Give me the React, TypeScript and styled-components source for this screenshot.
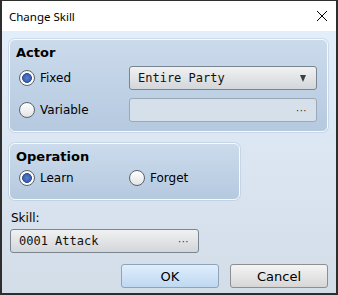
import React from "react";
import styled, { createGlobalStyle } from "styled-components";

const GlobalStyle = createGlobalStyle`
  html, body {
    margin: 0;
    padding: 0;
    background: #ffffff;
  }
`;

const Frame = styled.div`
  width: 338px;
  height: 295px;
  box-sizing: border-box;
  display: flex;
  flex-direction: column;
  border: 2px solid #2e2e2e;
  border-top-width: 1px;
  background: #ffffff;
`;

const TitleBar = styled.div`
  height: 30px;
  flex: none;
  display: flex;
  align-items: center;
  justify-content: space-between;
  padding: 0 8px 0 7px;
  font-family: "Noto Sans", sans-serif;
  font-size: 11.5px;
  color: #000;
  background: #ffffff;
`;

const CloseIcon = styled.svg`
  width: 12px;
  height: 12px;
  display: block;
`;

const Body = styled.div`
  flex: 1;
  display: flex;
  flex-direction: column;
  padding: 8px 8px 0 7px;
  background: linear-gradient(#e3eefb, #d2dde8);
  font-family: "DejaVu Sans", sans-serif;
  color: #000;
`;

const GroupBox = styled.div<{ $width: number }>`
  width: ${(p) => p.$width}px;
  box-sizing: border-box;
  border: 1px solid #f7fafd;
  box-shadow: 0 0 0 1px rgba(160, 180, 200, 0.35);
  border-radius: 6px;
  background: linear-gradient(#cbdbec, #b5c9df);
  padding: 5px 10px 9px 6px;
`;

const GroupTitle = styled.div`
  font-weight: bold;
  font-size: 13px;
  line-height: 16px;
  height: 16px;
`;

const ActorGrid = styled.div`
  display: grid;
  grid-template-columns: 113px 188px;
  row-gap: 8px;
  margin-top: 5px;
`;

const RadioLabel = styled.label`
  display: flex;
  align-items: center;
  gap: 5px;
  font-size: 12px;
  line-height: 24px;
  height: 24px;
  padding-left: 3px;
`;

const RadioCircle = styled.span<{ $checked?: boolean }>`
  width: 16px;
  height: 16px;
  box-sizing: border-box;
  border-radius: 50%;
  border: 1px solid #5c636b;
  background: ${(p) =>
    p.$checked
      ? "radial-gradient(circle, #5a82cc 0, #3b5fae 3.8px, #2f4f96 4.6px, #ffffff 5.2px, #f2f2f2 100%)"
      : "linear-gradient(#ffffff, #e2e4e6)"};
  flex: none;
`;

const Field = styled.div<{ $disabled?: boolean; $width?: number }>`
  height: 24px;
  box-sizing: border-box;
  width: ${(p) => (p.$width ? `${p.$width}px` : "auto")};
  display: flex;
  align-items: center;
  justify-content: space-between;
  padding: 0 9px 0 8px;
  border: 1px solid ${(p) => (p.$disabled ? "#9ba9b6" : "#7b858f")};
  border-radius: 3px;
  background: ${(p) =>
    p.$disabled ? "#d6e0ea" : "linear-gradient(#f0f1f2, #d3d6da)"};
  font-family: "DejaVu Sans Mono", monospace;
  font-size: 12px;
  color: #111;
`;

const Arrow = styled.span`
  width: 0;
  height: 0;
  border-left: 3.5px solid transparent;
  border-right: 3.5px solid transparent;
  border-top: 7px solid #3a3f45;
  margin-right: 1px;
`;

const Dots = styled.span`
  font-family: "DejaVu Sans", sans-serif;
  font-size: 10px;
  letter-spacing: 0.5px;
  color: #333;
`;

const OperationRow = styled.div`
  display: grid;
  grid-template-columns: 110px 100px;
  margin-top: 1px;
`;

const Spacer = styled.div`
  height: 11px;
  flex: none;
`;

const SkillLabel = styled.div`
  margin-top: 11px;
  padding-left: 2px;
  font-size: 12px;
  line-height: 15px;
`;

const SkillField = styled.div`
  margin-top: 3px;
  padding-left: 1px;
`;

const ButtonRow = styled.div`
  display: flex;
  justify-content: flex-end;
  gap: 11px;
  margin-top: 11px;
`;

const Button = styled.button<{ $primary?: boolean }>`
  width: 98px;
  height: 24px;
  box-sizing: border-box;
  border-radius: 3px;
  border: 1px solid ${(p) => (p.$primary ? "#8ea4ba" : "#8c8e90")};
  background: ${(p) =>
    p.$primary
      ? "linear-gradient(#e0eefc, #bfd8f1)"
      : "linear-gradient(#f4f4f4, #d6d6d6)"};
  font-family: "DejaVu Sans", sans-serif;
  font-size: 13px;
  color: #000;
  padding: 0;
`;

const Radio: React.FC<{ label: string; checked?: boolean }> = ({
  label,
  checked,
}) => (
  <RadioLabel>
    <RadioCircle $checked={checked} />
    {label}
  </RadioLabel>
);

export default function App() {
  return (
    <>
      <GlobalStyle />
      <Frame>
        <TitleBar>
          <span>Change Skill</span>
          <CloseIcon viewBox="0 0 12 12">
            <path d="M1 1 L11 11 M11 1 L1 11" stroke="#000" strokeWidth="1" />
          </CloseIcon>
        </TitleBar>
        <Body>
          <GroupBox $width={319}>
            <GroupTitle>Actor</GroupTitle>
            <ActorGrid>
              <Radio label="Fixed" checked />
              <Field>
                <span>Entire Party</span>
                <Arrow />
              </Field>
              <Radio label="Variable" />
              <Field $disabled>
                <span />
                <Dots>···</Dots>
              </Field>
            </ActorGrid>
          </GroupBox>
          <Spacer />
          <GroupBox $width={231}>
            <GroupTitle>Operation</GroupTitle>
            <OperationRow>
              <Radio label="Learn" checked />
              <Radio label="Forget" />
            </OperationRow>
          </GroupBox>
          <SkillLabel>Skill:</SkillLabel>
          <SkillField>
            <Field $width={189}>
              <span>0001 Attack</span>
              <Dots>···</Dots>
            </Field>
          </SkillField>
          <ButtonRow>
            <Button $primary>OK</Button>
            <Button>Cancel</Button>
          </ButtonRow>
        </Body>
      </Frame>
    </>
  );
}
